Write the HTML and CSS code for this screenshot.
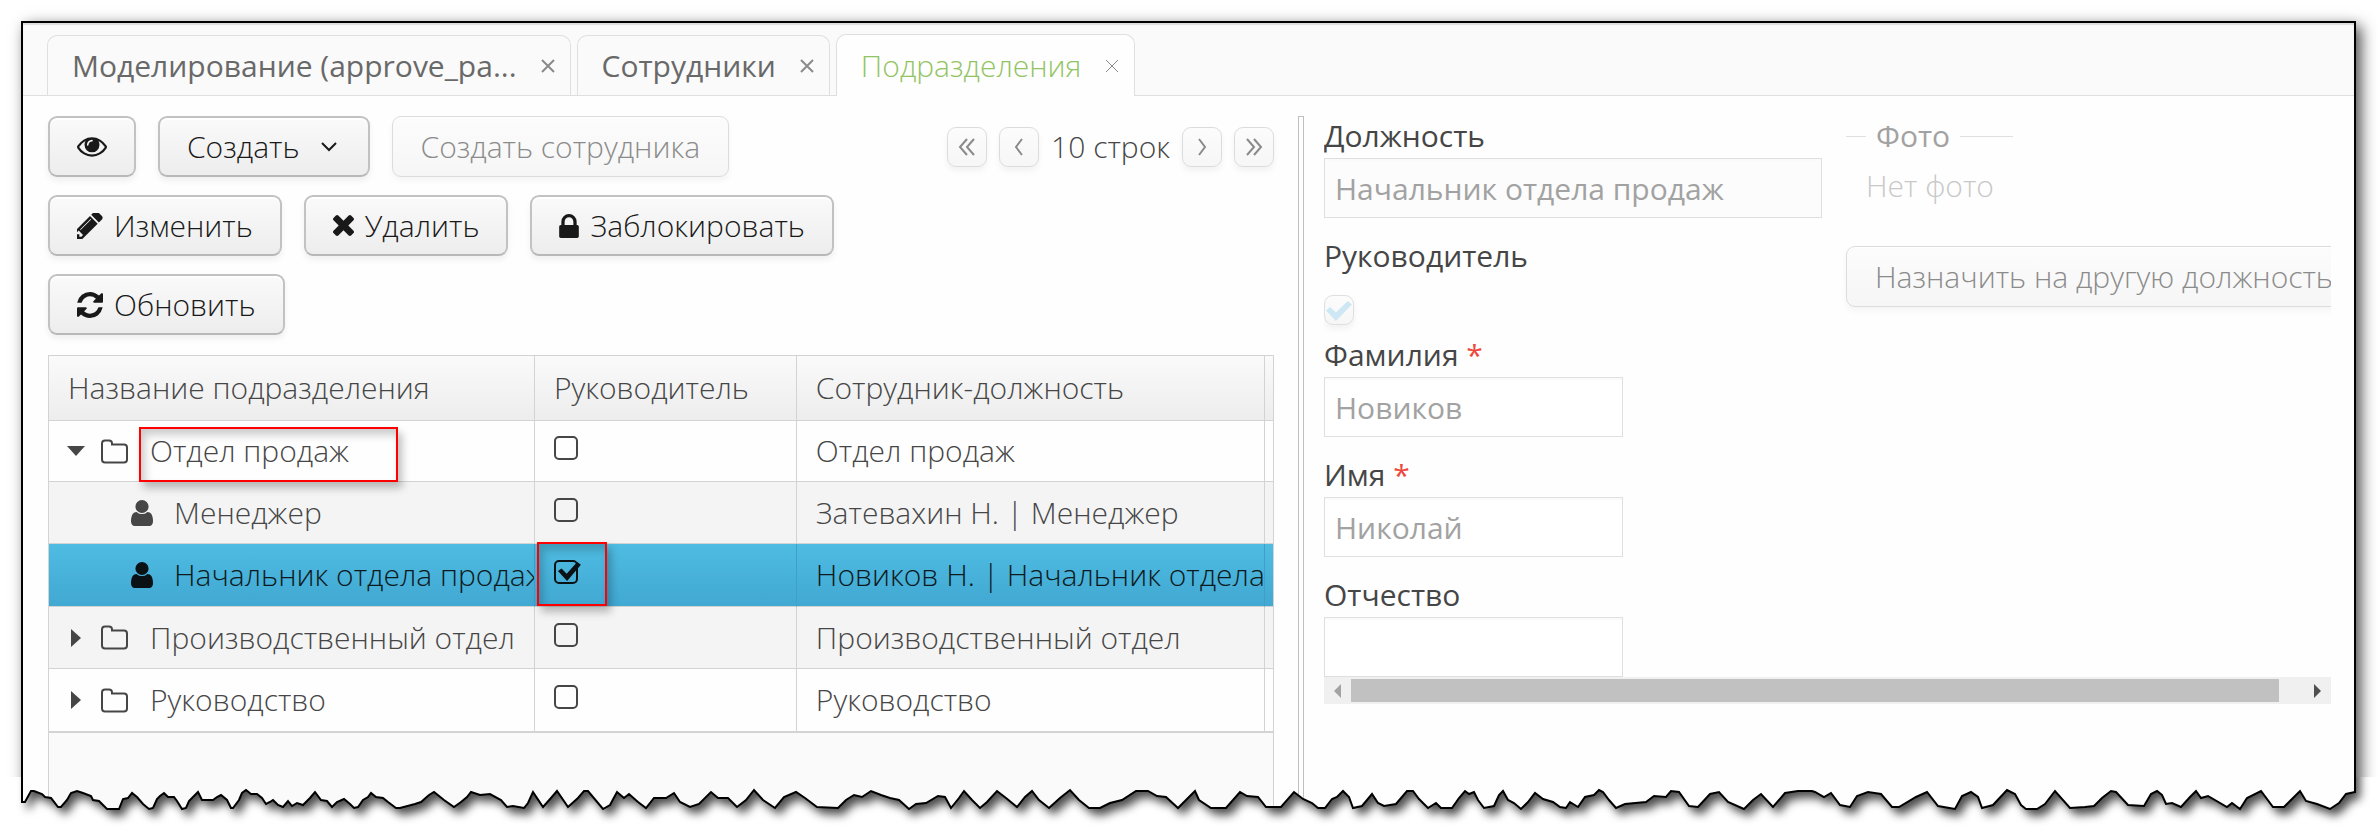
FILE: index.html
```html
<!DOCTYPE html>
<html lang="ru">

<head>
  <meta charset="UTF-8">
  <meta name="viewport" content="width=device-width, initial-scale=1.0">
  <title>Подразделения</title>
  <link rel="stylesheet" href="styles.css">
</head>

<body>

  <div class="page">
    <div class="window">

      <!-- Tabs -->
      <nav class="tabs">
        <div class="tab">
          <a href="#modeling">Моделирование (approve_pa...</a>
          <button class="tab-close" aria-label="Закрыть"><svg viewBox="0 0 14 14"><path d="M1 1l12 12M13 1L1 13"/></svg></button>
        </div>
        <div class="tab">
          <a href="#employees">Сотрудники</a>
          <button class="tab-close" aria-label="Закрыть"><svg viewBox="0 0 14 14"><path d="M1 1l12 12M13 1L1 13"/></svg></button>
        </div>
        <div class="tab active">
          <a href="#departments">Подразделения</a>
          <button class="tab-close" aria-label="Закрыть"><svg viewBox="0 0 14 14"><path d="M1 1l12 12M13 1L1 13"/></svg></button>
        </div>
      </nav>

      <main class="content">

        <!-- Departments list -->
        <section class="list-pane">
          <div class="toolbar">
            <div class="toolbar-row">
              <button class="btn" aria-label="Просмотр">
                <svg class="icon-eye" viewBox="0 384 1792 1152"><path d="M1664 960q-152-236-381-353 61 104 61 225 0 185-131.5 316.5t-316.5 131.5-316.5-131.5-131.5-316.5q0-121 61-225-229 117-381 353 133 205 333.5 326.5t434.5 121.5 434.5-121.5 333.5-326.5zm-720-384q0-20-14-34t-34-14q-125 0-214.5 89.5t-89.5 214.5q0 20 14 34t34 14 34-14 14-34q0-86 61-147t147-61q20 0 34-14t14-34zm848 384q0 34-20 69-140 230-376.5 368.5t-499.5 138.5-499.5-139-376.5-368q-20-35-20-69t20-69q140-229 376.5-368t499.5-139 499.5 139 376.5 368q20 35 20 69z"/></svg>
              </button>
              <button class="btn">Создать
                <svg class="icon-chevron" viewBox="0 0 18 12"><path d="M2 2l7 7 7-7"/></svg>
              </button>
              <button class="btn" disabled>Создать сотрудника</button>
              <div class="pager">
                <button class="btn-page" aria-label="Первая"><svg viewBox="0 0 18 18"><path d="M9 1L2 9l7 8M16 1L9 9l7 8"/></svg></button>
                <button class="btn-page" aria-label="Назад"><svg viewBox="0 0 18 18"><path d="M12 1L6 9l6 8"/></svg></button>
                <span class="pager-text">10 строк</span>
                <button class="btn-page" aria-label="Вперед"><svg viewBox="0 0 18 18"><path d="M6 1l6 8-6 8"/></svg></button>
                <button class="btn-page" aria-label="Последняя"><svg viewBox="0 0 18 18"><path d="M2 1l7 8-7 8M9 1l7 8-7 8"/></svg></button>
              </div>
            </div>
            <div class="toolbar-row">
              <button class="btn">
                <svg class="icon" viewBox="256 256 1408 1408"><path d="M491 1536l91-91-235-235-91 91v107h128v128h107zm523-928q0-22-22-22-10 0-17 7l-542 542q-7 7-7 17 0 22 22 22 10 0 17-7l542-542q7-7 7-17zm-54-192l416 416-832 832h-416v-416zm683 96q0 53-37 90l-166 166-416-416 166-165q36-38 90-38 53 0 91 38l235 234q37 39 37 91z"/></svg>
                Изменить
              </button>
              <button class="btn">
                <svg class="icon-times" viewBox="302 366 1188 1188"><path d="M1490 1322q0 40-28 68l-136 136q-28 28-68 28t-68-28l-294-294-294 294q-28 28-68 28t-68-28l-136-136q-28-28-28-68t28-68l294-294-294-294q-28-28-28-68t28-68l136-136q28-28 68-28t68 28l294 294 294-294q28-28 68-28t68 28l136 136q28 28 28 68t-28 68l-294 294 294 294q28 28 28 68z"/></svg>
                Удалить
              </button>
              <button class="btn">
                <svg class="icon-lock" viewBox="320 128 1152 1408"><path d="M640 768h512v-192q0-106-75-181t-181-75-181 75-75 181v192zm832 96v576q0 40-28 68t-68 28h-960q-40 0-68-28t-28-68v-576q0-40 28-68t68-28h32v-192q0-184 132-316t316-132 316 132 132 316v192h32q40 0 68 28t28 68z"/></svg>
                Заблокировать
              </button>
            </div>
            <div class="toolbar-row">
              <button class="btn">
                <svg class="icon" viewBox="128 128 1536 1536"><path d="M1639 1056q0 5-1 7-64 268-268 434.5t-478 166.5q-146 0-282.5-55t-243.5-157l-129 129q-19 19-45 19t-45-19-19-45v-448q0-26 19-45t45-19h448q26 0 45 19t19 45-19 45l-137 137q71 66 161 102t187 36q134 0 250-65t186-179q11-17 53-117 8-23 30-23h192q13 0 22.500 9.500t9.500 22.500zm25-800v448q0 26-19 45t-45 19h-448q-26 0-45-19t-19-45 19-45l138-138q-148-137-349-137-134 0-250 65t-186 179q-11 17-53 117-8 23-30 23h-199q-13 0-22.500-9.500t-9.500-22.500v-7q65-268 270-434.500t480-166.500q146 0 284 55.500t245 156.500l130-129q19-19 45-19t45 19 19 45z"/></svg>
                Обновить
              </button>
            </div>
          </div>

          <table class="tree">
            <colgroup>
              <col class="col-name">
              <col class="col-head">
              <col class="col-position">
              <col class="col-rest">
            </colgroup>
            <thead>
              <tr>
                <th>Название подразделения</th>
                <th>Руководитель</th>
                <th>Сотрудник-должность</th>
                <th></th>
              </tr>
            </thead>
            <tbody>
              <tr>
                <td class="name">
                  <div class="node">
                    <span class="toggle"><svg class="arrow-down" viewBox="0 0 18 10"><path d="M0 0h18L9 10z"/></svg></span>
                    <svg class="folder" viewBox="0 0 29 25"><path d="M2 4.500q0-3 3-3h4q3 0 3 3v1h12q3 0 3 3v12q0 3-3 3H5q-3 0-3-3z"/></svg>
                    <span class="marked">Отдел продаж</span>
                  </div>
                </td>
                <td><input type="checkbox" aria-label="Руководитель"></td>
                <td>Отдел продаж</td>
                <td></td>
              </tr>
              <tr class="odd">
                <td class="name">
                  <div class="node child">
                    <svg class="user" viewBox="256 128 1280 1536" preserveAspectRatio="none"><path d="M1536 1399q0 109-62.500 187t-150.500 78h-854q-88 0-150.500-78t-62.500-187q0-85 8.500-160.500t31.500-152 58.500-131 94-89 134.500-34.500q131 128 313 128t313-128q76 0 134.500 34.500t94 89 58.500 131 31.500 152 8.500 160.500zm-256-887q0 159-112.500 271.500t-271.500 112.500-271.500-112.500-112.500-271.500 112.500-271.500 271.500-112.500 271.500 112.500 112.500 271.500z"/></svg>
                    <span>Менеджер</span>
                  </div>
                </td>
                <td><input type="checkbox" aria-label="Руководитель"></td>
                <td>Затевахин Н. | Менеджер</td>
                <td></td>
              </tr>
              <tr class="selected">
                <td class="name">
                  <div class="node child">
                    <svg class="user" viewBox="256 128 1280 1536" preserveAspectRatio="none"><path d="M1536 1399q0 109-62.500 187t-150.500 78h-854q-88 0-150.500-78t-62.500-187q0-85 8.500-160.500t31.500-152 58.500-131 94-89 134.500-34.500q131 128 313 128t313-128q76 0 134.500 34.500t94 89 58.500 131 31.500 152 8.500 160.500zm-256-887q0 159-112.500 271.500t-271.500 112.500-271.500-112.500-112.500-271.500 112.500-271.500 271.500-112.500 271.500 112.500 112.500 271.500z"/></svg>
                    <span>Начальник отдела продаж</span>
                  </div>
                </td>
                <td class="marked-cell"><input type="checkbox" aria-label="Руководитель" checked></td>
                <td>Новиков Н. | Начальник отдела</td>
                <td></td>
              </tr>
              <tr class="odd">
                <td class="name">
                  <div class="node">
                    <span class="toggle"><svg class="arrow-right" viewBox="0 0 10 18"><path d="M0 0v18l10-9z"/></svg></span>
                    <svg class="folder" viewBox="0 0 29 25"><path d="M2 4.500q0-3 3-3h4q3 0 3 3v1h12q3 0 3 3v12q0 3-3 3H5q-3 0-3-3z"/></svg>
                    <span>Производственный отдел</span>
                  </div>
                </td>
                <td><input type="checkbox" aria-label="Руководитель"></td>
                <td>Производственный отдел</td>
                <td></td>
              </tr>
              <tr>
                <td class="name">
                  <div class="node">
                    <span class="toggle"><svg class="arrow-right" viewBox="0 0 10 18"><path d="M0 0v18l10-9z"/></svg></span>
                    <svg class="folder" viewBox="0 0 29 25"><path d="M2 4.500q0-3 3-3h4q3 0 3 3v1h12q3 0 3 3v12q0 3-3 3H5q-3 0-3-3z"/></svg>
                    <span>Руководство</span>
                  </div>
                </td>
                <td><input type="checkbox" aria-label="Руководитель"></td>
                <td>Руководство</td>
                <td></td>
              </tr>
            </tbody>
          </table>
          <div class="tree-empty"></div>
        </section>

        <div class="splitter"></div>

        <!-- Employee card -->
        <section class="card-pane">
          <form class="card">
            <div class="fields">
              <div class="field">
                <label for="position">Должность</label>
                <input type="text" id="position" class="wide" value="Начальник отдела продаж" disabled>
              </div>
              <div class="field field-check">
                <label for="head">Руководитель</label>
                <input type="checkbox" id="head" checked disabled>
              </div>
              <div class="field">
                <label for="surname">Фамилия <span class="required">*</span></label>
                <input type="text" id="surname" value="Новиков" disabled>
              </div>
              <div class="field">
                <label for="firstname">Имя <span class="required">*</span></label>
                <input type="text" id="firstname" value="Николай" disabled>
              </div>
              <div class="field">
                <label for="patronymic">Отчество</label>
                <input type="text" id="patronymic" value="" disabled>
              </div>
            </div>
            <div class="side">
              <div class="photo">
                <div class="photo-title">Фото</div>
                <div class="photo-empty">Нет фото</div>
              </div>
              <button type="button" class="btn" disabled>Назначить на другую должность</button>
            </div>
          </form>
          <div class="scrollbar">
            <svg class="scroll-left" viewBox="0 0 7 14"><path d="M7 0v14L0 7z"/></svg>
            <div class="thumb"></div>
            <svg class="scroll-right" viewBox="0 0 7 14"><path d="M0 0v14l7-7z"/></svg>
          </div>
        </section>

      </main>
    </div>

    <!-- Torn bottom edge -->
    <svg class="torn" viewBox="0 0 2377 60" preserveAspectRatio="none" aria-hidden="true">
      <defs>
        <filter id="soft" x="-5%" y="-50%" width="110%" height="200%"><feGaussianBlur stdDeviation="5"/></filter>
        <clipPath id="outside"><path class="torn-outside"/></clipPath>
      </defs>
      <path class="torn-outside torn-back"/>
      <g clip-path="url(#outside)"><path class="torn-shadow"/></g>
      <path class="torn-line" id="edge" d="M22 25 25 25 31 14 34 14 42 17 45 20 51 21 58 30 61 30 67 23 71 16 77 14 83 16 91 19 93 23 99 24 107 32 119 32 123 22 128 21 132 16 137 20 143 27 149 32 153 31 157 22 160 19 164 16 168 20 174 20 177 24 182 32 186 31 189 24 193 20 198 15 202 23 213 23 217 20 221 18 227 23 231 31 233 31 239 23 242 16 246 13 251 17 257 17 262 21 266 27 270 25 273 23 278 28 283 30 288 24 292 29 297 26 303 28 310 21 315 15 321 23 327 24 332 30 337 25 344 22 350 27 354 31 358 30 363 23 368 20 371 16 376 20 383 21 388 25 396 31 400 31
        415 27 421 25 429 18 434 15 444 23 454 30 461 25 467 20 471 15 480 18 490 17 501 23 507 30 513 29 524 31 528 26 533 15 543 30 551 21 557 14 568 30 578 21 584 14 588 14 603 32 610 28 617 15 624 21 629 17 638 25 646 31 654 21 666 21 674 16 680 25 690 30 699 27 711 15 718 21 728 21 737 30 746 23 754 13 763 23 775 31 784 20 796 15 805 21 817 30 838 31 846 23 854 18 862 20 871 14 881 18 890 21 899 23 909 32 916 27 926 26 938 19 945 20 951 31 959 21 964 14 972 23 980 31 987 25 997 14 1006 21 1017 30 1025 20 1032 14 1039 23 1049 31 1060 21 1070 13 1079 23 1089 31 1100 31 1110 26 1122 23 1136 14 1148 14 1157 19 1166 20 1178 31 1188 21 1195 14 1199 23 1211 31 1226 31 1240 15 1247 19 1258 20 1266 30 1281 30
        1294 15 1303 22 1312 26 1318 31 1325 31 1332 22 1337 20 1343 14 1349 20 1353 31 1362 29 1372 17 1378 26 1384 29 1396 27 1407 14 1413 14 1419 22 1428 31 1436 26 1441 31 1452 31 1459 21 1465 14 1469 17 1474 15 1478 23 1484 31 1494 29 1499 18 1503 14 1508 23 1514 26 1521 32 1528 25 1535 16 1543 22 1553 25 1560 30 1566 31 1570 25 1578 30 1585 20 1594 18 1599 13 1603 15 1609 23 1616 31 1625 27 1646 25 1654 19 1666 20 1671 14 1679 15 1689 29 1698 30 1710 17 1719 15 1728 25 1744 32 1753 23 1761 17 1773 30 1785 16 1798 14 1812 14
        1815 15 1824 20 1831 16 1840 28 1850 30 1857 19 1868 15 1881 17 1892 30 1899 30 1916 20 1927 15 1938 29 1955 32 1962 19 1971 15 1978 20 1982 31 1993 28 2007 13 2015 17 2021 28 2026 32 2037 32 2045 27 2055 14 2070 31 2085 30 2094 29 2102 21 2111 14 2116 15 2128 28 2144 29 2151 17 2157 14 2162 18 2166 27 2172 26 2181 30 2190 20 2196 14 2201 21 2208 19 2227 30 2232 26 2240 32 2247 21 2261 14 2273 30 2284 30 2293 21 2300 14 2306 24 2317 27 2330 32 2339 26 2346 17 2355 15"/>
      <path class="torn-line" d="M22 0V26M2355 0V16"/>
    </svg>
  </div>

  <script>
    // The area below the tear and the shadow both follow the edge line
    const edge = document.getElementById('edge').getAttribute('d');

    document.querySelectorAll('.torn-outside').forEach(path => {
      path.setAttribute('d', edge + ' L2356 0 H2377 V60 H0 V0 H21 Z');
    });
    document.querySelector('.torn-shadow').setAttribute('d', edge + ' L2356 -60 H22 Z');
  </script>

</body>

</html>
```
FILE: styles.css
```css
/* Global Styles */
*,
*::before,
*::after {
  box-sizing: border-box;
}

body {
  margin: 0;
  font-family: "Open Sans", sans-serif;
  font-size: 30px;
  font-weight: 300;
  line-height: 40px;
  color: #464646;
  background-color: #fff;
}

button,
input {
  font: inherit;
  color: inherit;
}

.page {
  position: relative;
  display: flex;
  flex-direction: column;
  min-height: 100vh;
  padding: 21px 21px 25px;
}

.window {
  flex: 1;
  display: flex;
  flex-direction: column;
  background-color: #fefefe;
  border: 2px solid #000;
  border-bottom: none;
  box-shadow: 5px 5px 14px rgba(0, 0, 0, 0.7);
}

/* Tabs */
.tabs {
  display: flex;
  align-items: flex-end;
  gap: 6px;
  height: 73px;
  padding: 0 24px;
  background-color: #fafafa;
  border-bottom: 1px solid #dfdfdf;
  box-shadow: inset 0 2px 1px #ddd;
}

.tab {
  display: flex;
  align-items: center;
  gap: 24px;
  height: 60px;
  padding: 0 15px 0 24px;
  border: 1px solid #dfdfdf;
  border-bottom: none;
  border-radius: 10px 10px 0 0;
  font-weight: 400;
}

.tab a {
  color: #696969;
  text-decoration: none;
}

.tab.active {
  height: 62px;
  margin-bottom: -1px;
  background-color: #fefefe;
  font-weight: 300;
}

.tab.active a {
  color: #93c464;
}

.tab-close {
  display: flex;
  padding: 0;
  border: none;
  background: none;
}

.tab-close svg {
  width: 14px;
  height: 14px;
  fill: none;
  stroke: #8a8a8a;
  stroke-width: 2;
}

.tab.active .tab-close svg {
  stroke-width: 1;
}

/* Content */
.content {
  flex: 1;
  display: grid;
  grid-template-columns: minmax(0, 1226fr) 30px minmax(0, 1027fr);
  padding: 20px 23px 0 25px;
}

.list-pane {
  display: flex;
  flex-direction: column;
}

.splitter {
  width: 6px;
  margin-left: 24px;
  border: 1px solid #bfbfbf;
  border-bottom: none;
}

/* Toolbar */
.toolbar {
  display: flex;
  flex-direction: column;
  gap: 18px;
  margin-bottom: 20px;
}

.toolbar-row {
  display: flex;
  align-items: center;
  gap: 22px;
}

.btn {
  display: flex;
  align-items: center;
  gap: 11px;
  height: 61px;
  padding: 0 27px;
  border: 2px solid #c2c2c2;
  border-bottom-color: #b8b8b8;
  border-radius: 9px;
  background: linear-gradient(#fafafa, #ededed);
  box-shadow: inset 0 2px 0 #fff, 0 4px 6px rgba(0, 0, 0, 0.06);
  color: #191919;
  white-space: nowrap;
}

.btn:disabled {
  padding: 0 28px;
  border: 1px solid #dcdcdc;
  background: linear-gradient(#fcfcfc, #f6f6f6);
  box-shadow: inset 0 1px 0 #fff, 0 4px 6px rgba(0, 0, 0, 0.04);
  color: #8b8b8b;
}

.icon,
.icon-eye,
.icon-times,
.icon-lock {
  width: 26px;
  height: 26px;
  fill: #191919;
}

.icon-eye {
  width: 30px;
  height: 20px;
}

.icon-times {
  width: 21px;
  height: 21px;
}

.icon-lock {
  width: 20px;
  height: 24px;
}

.icon-chevron {
  width: 18px;
  height: 12px;
  margin: 0 3px 0 9px;
  fill: none;
  stroke: #191919;
  stroke-width: 2;
}

/* Pager */
.pager {
  display: flex;
  align-items: center;
  gap: 12px;
  margin-left: auto;
}

.btn-page {
  display: flex;
  align-items: center;
  justify-content: center;
  width: 40px;
  height: 40px;
  padding: 0;
  border: 1px solid #dcdcdc;
  border-radius: 9px;
  background: linear-gradient(#fcfcfc, #f6f6f6);
  box-shadow: 0 4px 6px rgba(0, 0, 0, 0.05);
}

.btn-page svg {
  width: 18px;
  height: 18px;
  fill: none;
  stroke: #8a8a8a;
  stroke-width: 2;
}

/* Tree table */
.tree {
  width: 100%;
  table-layout: fixed;
  border-collapse: separate;
  border-spacing: 0;
  border: 1px solid #d3d3d3;
  border-bottom-width: 2px;
}

.col-name {
  width: 39.7%;
}

.col-head {
  width: 21.4%;
}

.col-rest {
  width: 8px;
}

.tree th {
  height: 65px;
  padding: 0 19px;
  border-bottom: 1px solid #d3d3d3;
  border-right: 1px solid #d3d3d3;
  background: linear-gradient(#fafafa, #ededed);
  font-weight: 300;
  text-align: left;
}

.tree td {
  height: 62px;
  padding: 0 0 0 19px;
  border-right: 1px solid #d3d3d3;
  border-bottom: 1px solid #d3d3d3;
  white-space: nowrap;
}

.tree tr:first-child td {
  height: 61px;
}

.tree tr:last-child td {
  border-bottom: none;
}

.tree th:last-child,
.tree td:last-child {
  padding: 0;
  border-right: none;
}

.tree .name {
  padding: 0;
}

.tree .odd td {
  background-color: #f4f4f4;
}

.tree .selected td {
  height: 63px;
  background: linear-gradient(#4fbce2, #41a8d2);
  border-right-color: #3f9fc6;
  color: #0d1a20;
}

.node {
  display: flex;
  align-items: center;
  padding-left: 18px;
  overflow: hidden;
}

.node.child {
  gap: 21px;
  padding-left: 82px;
}

.toggle {
  display: flex;
  justify-content: center;
  width: 18px;
  margin-right: 15px;
}

.toggle svg {
  fill: #464646;
}

.arrow-down {
  width: 18px;
  height: 10px;
}

.arrow-right {
  width: 10px;
  height: 18px;
}

.folder {
  width: 29px;
  height: 25px;
  margin-right: 21px;
  fill: none;
  stroke: #464646;
  stroke-width: 2;
}

.user {
  flex-shrink: 0;
  width: 22px;
  height: 26px;
  fill: #464646;
}

.selected .user {
  fill: #0a1216;
}

.tree input {
  appearance: none;
  position: relative;
  display: block;
  width: 24px;
  height: 24px;
  margin: 0 0 6px;
  border: 2px solid #464646;
  border-radius: 5px;
}

.tree input:checked {
  border-color: #0a1216;
}

.tree input:checked::after {
  content: "";
  position: absolute;
  top: 0;
  left: 2px;
  width: 23px;
  height: 19px;
  background-color: #0a1216;
  clip-path: polygon(0 48%, 16% 34%, 38% 62%, 84% 0, 100% 14%, 40% 100%);
}

/* Red frames over the tree */
.node .marked {
  position: relative;
}

.node:has(.marked) {
  overflow: visible;
}

.marked::before,
.marked-cell::before {
  content: "";
  position: absolute;
  border: 2px solid #f00;
  box-shadow: 4px 6px 8px rgba(0, 0, 0, 0.25), inset 4px 6px 8px rgba(0, 0, 0, 0.2);
}

.marked::before {
  top: -4px;
  left: -11px;
  width: 259px;
  height: 55px;
}

.marked-cell {
  position: relative;
}

.marked-cell::before {
  top: -2px;
  left: 2px;
  width: 70px;
  height: 64px;
}

.tree-empty {
  flex: 1;
  border: 1px solid #d3d3d3;
  border-top: none;
  border-bottom: none;
  background-color: #fafafa;
}

/* Employee card */
.card-pane {
  min-width: 0;
  padding-left: 20px;
}

.card {
  display: flex;
  gap: 24px;
  overflow: hidden;
  font-weight: 400;
}

.fields {
  flex-shrink: 0;
  width: 498px;
}

.field {
  display: flex;
  flex-direction: column;
  align-items: flex-start;
  gap: 2px;
  margin-bottom: 18px;
}

.field:last-child {
  margin-bottom: 0;
}

.field-check {
  gap: 19px;
  margin-bottom: 10px;
}

.required {
  color: #ed473b;
}

.field input[type="text"] {
  width: 60%;
  height: 60px;
  padding: 0 10px;
  border: 1px solid #dfdfdf;
  border-radius: 0;
  background-color: #fff;
  box-shadow: inset 0 2px 1px #fafafa;
  color: #a2a2a2;
}

.field input[type="text"].wide {
  width: 100%;
  background-color: #fcfcfc;
}

.field-check input {
  appearance: none;
  position: relative;
  width: 30px;
  height: 30px;
  margin: 0;
  border: 1px solid #dfdfdf;
  border-radius: 9px;
  background: linear-gradient(#fcfcfc, #f6f6f6);
  box-shadow: 0 4px 6px rgba(0, 0, 0, 0.05);
}

.field-check input::after {
  content: "";
  position: absolute;
  top: 5px;
  left: 1px;
  width: 26px;
  height: 20px;
  background-color: #cde8f4;
  clip-path: polygon(0 48%, 16% 30%, 38% 58%, 84% 0, 100% 18%, 38% 100%);
}

.side {
  flex-shrink: 0;
}

.photo {
  width: 167px;
  margin-bottom: 40px;
}

.photo-title {
  display: flex;
  align-items: center;
  gap: 10px;
  color: #a2a2a2;
}

.photo-title::before,
.photo-title::after {
  content: "";
  width: 20px;
  height: 1px;
  background-color: #dfdfdf;
}

.photo-title::after {
  flex: 1;
}

.photo-empty {
  margin-top: 10px;
  padding-left: 20px;
  color: #c8c8c8;
  font-weight: 300;
}

.side .btn {
  font-weight: 300;
}

/* Scrollbar */
.scrollbar {
  display: flex;
  align-items: center;
  gap: 10px;
  height: 27px;
  padding: 0 10px;
  background-color: #f0f0f0;
}

.scrollbar svg {
  width: 7px;
  height: 14px;
  fill: #505050;
}

.scrollbar .scroll-left {
  fill: #a3a3a3;
}

.thumb {
  width: 94%;
  height: 23px;
  margin-right: auto;
  background-color: #c1c1c1;
}

/* Torn edge */
.torn {
  position: absolute;
  left: 0;
  bottom: 0;
  width: 100%;
  height: 60px;
}

.torn-back {
  fill: #fff;
}

.torn-shadow {
  fill: rgba(0, 0, 0, 0.7);
  filter: url(#soft);
  transform: translate(5px, 7px);
}

.torn-line {
  fill: none;
  stroke: #000;
  stroke-width: 2;
}
```
